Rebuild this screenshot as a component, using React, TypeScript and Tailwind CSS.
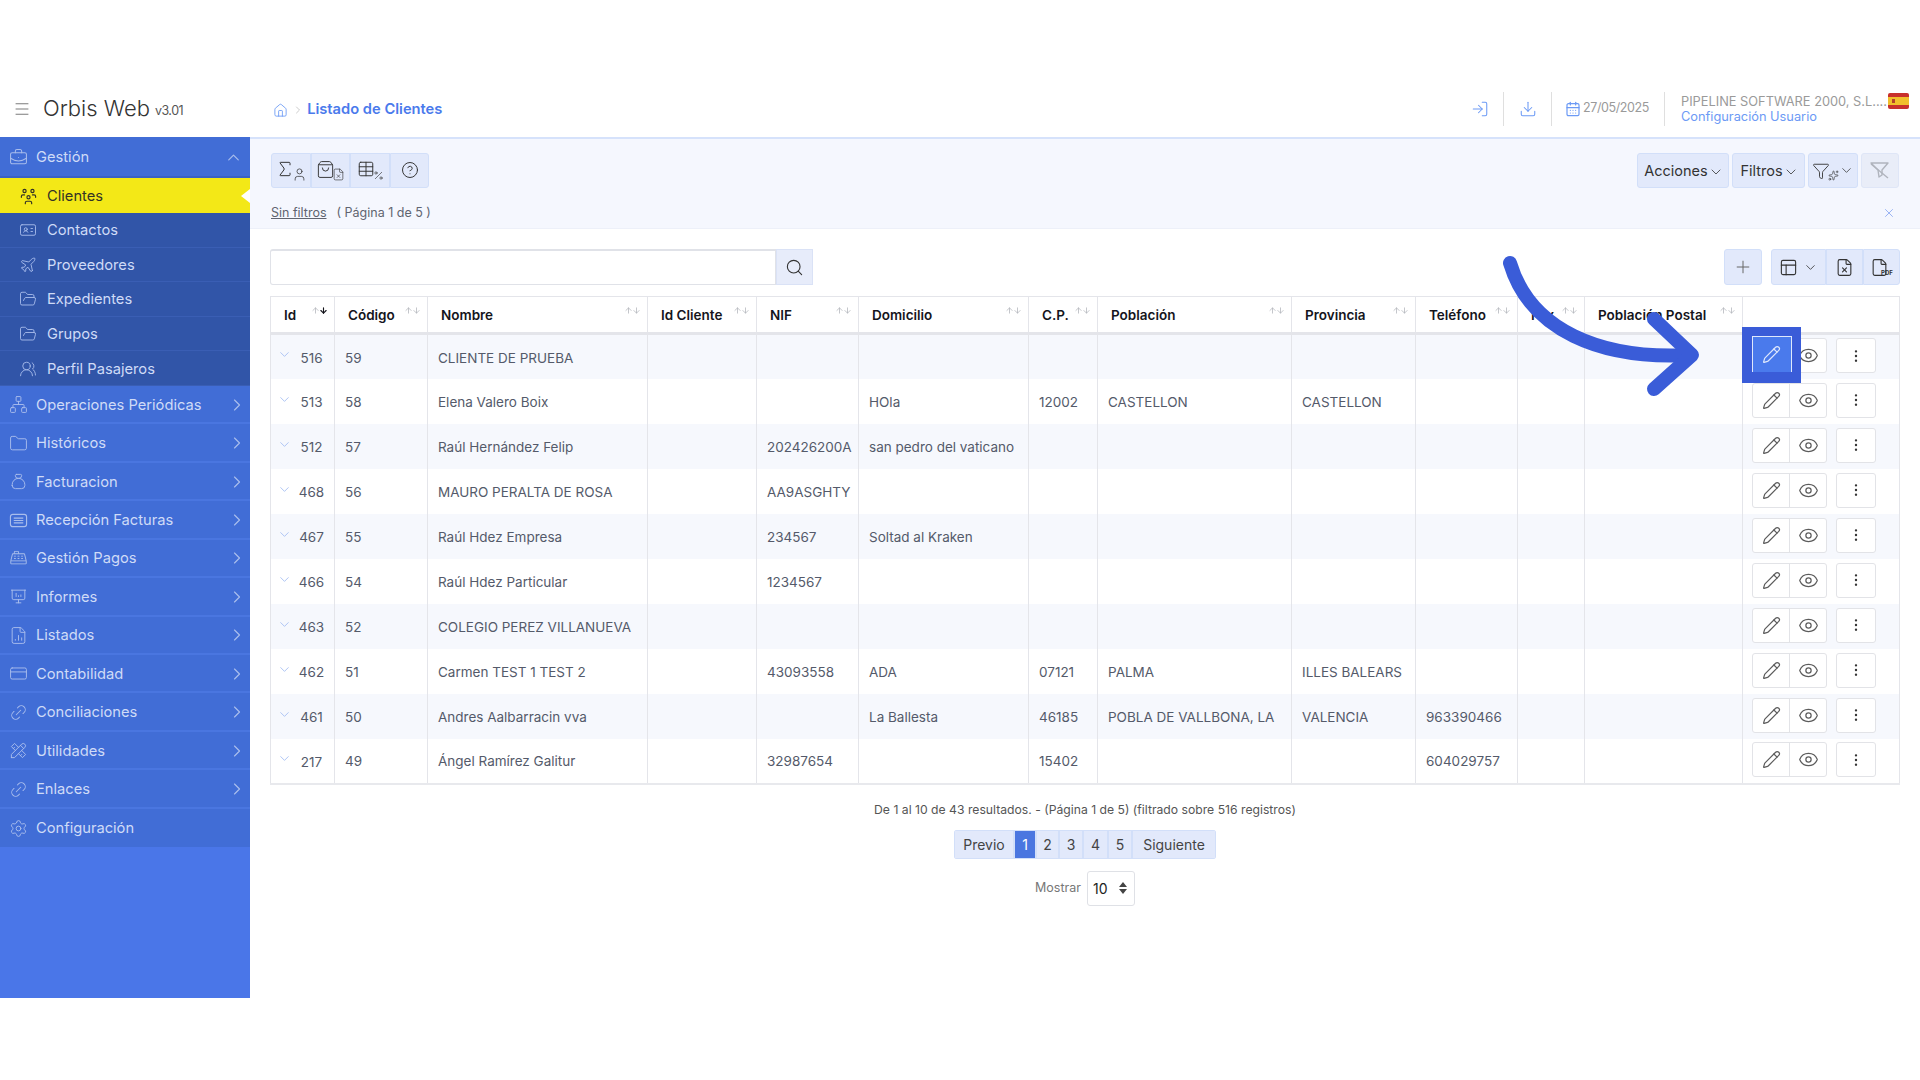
import React from 'react';
import {
  ArrowUp, ArrowDown, BriefcaseBusiness, ChevronDown, ChevronRight, ChevronUp, CircleHelp, CreditCard, EllipsisVertical, Eye, File, FileChartColumn, FileX, Filter, Folder, FolderOpen, Home, IdCard, Link2, LogIn, Menu, Network, PanelsTopLeft, Pencil, Percent, Plane, Plus, Search, Settings, ShoppingBag, Sigma, Sparkles, Table, User, UsersRound, X, Download, CalendarDays,
} from 'lucide-react';
import { TbMoneybag, TbTools, TbPresentationAnalytics, TbUsersGroup } from 'react-icons/tb';
import { PiCashRegisterLight } from 'react-icons/pi';

const font = { fontFamily: 'Inter, "Noto Sans", sans-serif' };

const LinkIcon = ({ size, className, strokeWidth }: any) => <Link2 size={size} strokeWidth={strokeWidth} className={`${className} -rotate-45`} />;
const TbI = (I: any) => ({ size, className }: any) => <I size={size} className={className} style={{ strokeWidth: 1.2 }} />;
const ListCard = ({ size, className }: any) => (
  <svg width={size} height={size} viewBox="0 0 20 20" fill="none" stroke="currentColor" strokeWidth="1.2" className={className}>
    <rect x="1.5" y="3.5" width="17" height="13" rx="2.5" />
    <path d="M5 7.5H15M5 10H15M5 12.5H15" />
  </svg>
);

const subItems = [
  { label: 'Contactos', Icon: IdCard },
  { label: 'Proveedores', Icon: Plane },
  { label: 'Expedientes', Icon: FolderOpen },
  { label: 'Grupos', Icon: FolderOpen },
  { label: 'Perfil Pasajeros', Icon: UsersRound },
];

const mainItems = [
  { label: 'Operaciones Periódicas', Icon: Network },
  { label: 'Históricos', Icon: Folder },
  { label: 'Facturacion', Icon: TbI(TbMoneybag) },
  { label: 'Recepción Facturas', Icon: ListCard },
  { label: 'Gestión Pagos', Icon: PiCashRegisterLight },
  { label: 'Informes', Icon: TbI(TbPresentationAnalytics) },
  { label: 'Listados', Icon: FileChartColumn },
  { label: 'Contabilidad', Icon: CreditCard },
  { label: 'Conciliaciones', Icon: LinkIcon },
  { label: 'Utilidades', Icon: TbI(TbTools) },
  { label: 'Enlaces', Icon: LinkIcon },
];

const headers = ['Id', 'Código', 'Nombre', 'Id Cliente', 'NIF', 'Domicilio', 'C.P.', 'Población', 'Provincia', 'Teléfono', 'Fax', 'Población Postal', ''];

const rows = [
  ['516', '59', 'CLIENTE DE PRUEBA', '', '', '', '', '', '', '', '', ''],
  ['513', '58', 'Elena Valero Boix', '', '', 'HOla', '12002', 'CASTELLON', 'CASTELLON', '', '', ''],
  ['512', '57', 'Raúl Hernández Felip', '', '202426200A', 'san pedro del vaticano', '', '', '', '', '', ''],
  ['468', '56', 'MAURO PERALTA DE ROSA', '', 'AA9ASGHTY', '', '', '', '', '', '', ''],
  ['467', '55', 'Raúl Hdez Empresa', '', '234567', 'Soltad al Kraken', '', '', '', '', '', ''],
  ['466', '54', 'Raúl Hdez Particular', '', '1234567', '', '', '', '', '', '', ''],
  ['463', '52', 'COLEGIO PEREZ VILLANUEVA', '', '', '', '', '', '', '', '', ''],
  ['462', '51', 'Carmen TEST 1 TEST 2', '', '43093558', 'ADA', '07121', 'PALMA', 'ILLES BALEARS', '', '', ''],
  ['461', '50', 'Andres Aalbarracin vva', '', '', 'La Ballesta', '46185', 'POBLA DE VALLBONA, LA', 'VALENCIA', '963390466', '', ''],
  ['217', '49', 'Ángel Ramírez Galitur', '', '32987654', '', '15402', '', '', '604029757', '', ''],
];

function Sidebar() {
  return (
    <aside className="w-[250px] h-[861px] shrink-0 bg-[#4a76e8] text-[14.7px] text-[#cfdbf7]">
      <div className="h-[41px] bg-[#416dd6] border-b-2 border-[#3a62c4] flex items-center pl-[9px] pr-[7px] pt-[1px]">
        <BriefcaseBusiness size={19} strokeWidth={1.3} className="text-[#a9bdec] mr-[8px]" />
        <span className="flex-1">Gestión</span>
        <ChevronUp size={19} strokeWidth={1.5} className="text-[#a9bdec]" />
      </div>
      <div className="relative h-[35px] bg-[#f3e817] text-[#333326] flex items-center pl-[19px] pt-[1px]">
        <TbUsersGroup size={19} className="mr-[9px]" style={{ strokeWidth: 1.5 }} />
        <span>Clientes</span>
        <span className="absolute right-0 top-[11px] w-0 h-0 border-y-[7px] border-y-transparent border-r-[9px] border-r-white" />
      </div>
      {subItems.map(({ label, Icon }) => (
        <div key={label} className="h-[34.6px] bg-[#3155a8] border-b border-[#3a5eb4] flex items-center pl-[19px] pt-[1px]">
          <Icon size={18} strokeWidth={1.2} className="text-[#a9bdec] mr-[10px]" />
          <span>{label}</span>
        </div>
      ))}
      {mainItems.map(({ label, Icon }) => (
        <div key={label} className="h-[38.45px] bg-[#416dd6] border-b-2 border-[#4a76e0] flex items-center pl-[9px] pr-[3px] pt-[1px]">
          <Icon size={19} strokeWidth={1.2} className="text-[#a9bdec] mr-[8px]" />
          <span className="flex-1">{label}</span>
          <ChevronRight size={20} strokeWidth={1.4} className="text-[#a9bdec]" />
        </div>
      ))}
      <div className="h-[38px] bg-[#416dd6] flex items-center pl-[9px] pt-[1px]">
        <Settings size={19} strokeWidth={1.2} className="text-[#a9bdec] mr-[8px]" />
        <span>Configuración</span>
      </div>
    </aside>
  );
}

function Flag() {
  return (
    <svg width="21" height="16" viewBox="0 0 21 16" className="absolute right-[11px] top-[-1px]">
      <rect width="21" height="16" rx="2" fill="#c8302c" />
      <rect y="4" width="21" height="8" fill="#f1bf2c" />
      <rect x="4" y="6" width="3" height="4" fill="#b5422a" />
    </svg>
  );
}

function Header() {
  return (
    <div className="pt-[80px]">
      <header className="relative h-[57px] flex items-center">
        <Menu size={18} strokeWidth={1.3} className="ml-[13px] text-[#777]" />
        <span className="ml-[12px] text-[22px] font-light text-[#333]">Orbis Web</span>
        <span className="ml-[5px] mt-[5px] text-[12.5px] tracking-[-0.5px] text-[#555]">v3.01</span>
        <Home size={15} strokeWidth={1.4} className="ml-[90px] mt-[3px] text-[#6c9af5]" />
        <ChevronRight size={12} strokeWidth={1.2} className="ml-[4px] mt-[2px] text-[#aaa]" />
        <span className="ml-[3px] mt-[2px] text-[14.7px] font-semibold text-[#4a7aec]">Listado de Clientes</span>
        <div className="ml-auto flex items-center h-full text-[#6c9af5]">
          <LogIn size={18} strokeWidth={1.4} />
          <span className="ml-[14px] h-[34px] w-px bg-[#dfdfdf]" />
          <Download size={18} strokeWidth={1.4} className="ml-[15px]" />
          <span className="ml-[14px] h-[34px] w-px bg-[#dfdfdf]" />
          <CalendarDays size={16} strokeWidth={1.8} className="ml-[13px]" />
          <span className="ml-[2px] text-[12.5px] tracking-[-0.4px] text-[#9a9a9a]">27/05/2025</span>
          <span className="ml-[15px] h-[34px] w-px bg-[#dfdfdf]" />
          <div className="relative ml-[16px] w-[239px] text-[12.8px] leading-[15px]">
            <div className="text-[#9a9a9a]">PIPELINE SOFTWARE 2000, S.L....</div>
            <div className="text-[#6c9af5]">Configuración Usuario</div>
            <Flag />
          </div>
        </div>
      </header>
    </div>
  );
}

const tb = 'h-[35px] flex items-center justify-center bg-[#e2e9fb] border border-[#d2dff9] text-[#333]';

function TopBar() {
  return (
    <section className="h-[92px] bg-[#f5f7fe] border-t-2 border-[#d6e2fb] border-b border-b-[#edf0f9] pl-[21px] pr-[21px] pt-[14px]">
      <div className="flex justify-between">
        <div className="flex">
          <div className={`${tb} w-[40px] rounded-l-[3px]`}>
            <Sigma size={20} strokeWidth={1.2} className="-mr-[3px] -mt-[3px]" /><User size={15} strokeWidth={1.2} className="mt-[8px]" />
          </div>
          <div className={`${tb} w-[39px]`}>
            <ShoppingBag size={19} strokeWidth={1.2} className="-mr-[3px] -mt-[3px]" /><FileX size={13} strokeWidth={1.2} className="mt-[8px]" />
          </div>
          <div className={`${tb} w-[40px]`}>
            <Table size={18} strokeWidth={1.3} className="-mr-[2px] -mt-[3px]" /><Percent size={11} strokeWidth={1.4} className="mt-[10px]" />
          </div>
          <div className={`${tb} w-[39px] rounded-r-[3px]`}>
            <CircleHelp size={18} strokeWidth={1.3} className="-mt-[1px]" />
          </div>
        </div>
        <div className="flex gap-[3px] text-[14.5px] text-[#444]">
          <div className={`${tb} w-[92px] rounded-[3px] pl-[2px]`}>Acciones<ChevronDown size={16} strokeWidth={1.2} className="mt-[2px]" /></div>
          <div className={`${tb} w-[73px] rounded-[3px] pl-[2px]`}>Filtros<ChevronDown size={16} strokeWidth={1.2} className="mt-[2px]" /></div>
          <div className={`${tb} w-[50px] rounded-[3px]`}>
            <Filter size={18} strokeWidth={1.2} className="-mr-[2px]" /><Sparkles size={11} strokeWidth={1.4} className="mt-[9px]" /><ChevronDown size={15} strokeWidth={1.2} />
          </div>
          <div className="h-[35px] w-[38px] rounded-[3px] flex items-center justify-center bg-[#e9edf8] border border-[#dfe6f7] text-[#b0b4bd]">
            <svg width="22" height="20" viewBox="0 0 22 20" fill="none" stroke="currentColor" strokeWidth="1.4" strokeLinejoin="round">
              <path d="M2 2H19L13 9V14L10 16 9 9Z" /><path d="M2 3 19 17" />
            </svg>
          </div>
        </div>
      </div>
      <div className="mt-[16px] flex items-center text-[12.5px] text-[#606470]">
        <span className="underline">Sin filtros</span>
        <span className="ml-[10px]">( Página 1 de 5 )</span>
        <X size={14} strokeWidth={1.3} className="ml-auto mr-[3px] text-[#7d9ff0]" />
      </div>
    </section>
  );
}

function SearchRow() {
  return (
    <div className="mt-[20px] flex items-start">
      <div className="w-[506px] h-[36px] border border-[#e0e2e8] border-t-2 rounded-l-[3px] bg-white" />
      <div className="w-[37px] h-[36px] bg-[#e7ecfa] border border-[#dae2f6] flex items-center justify-center text-[#333]">
        <Search size={19} strokeWidth={1.4} />
      </div>
      <div className="ml-auto flex">
        <div className="h-[36px] w-[38px] rounded-[3px] flex items-center justify-center bg-[#e2e9fb] border border-[#d2dff9] text-[#666]">
          <Plus size={20} strokeWidth={1.2} />
        </div>
        <div className="ml-[9px] flex">
          <div className="h-[36px] w-[55px] rounded-l-[3px] flex items-center justify-center bg-[#e2e9fb] border border-[#d2dff9] text-[#333]">
            <PanelsTopLeft size={19} strokeWidth={1.4} /><ChevronDown size={15} strokeWidth={1.3} className="ml-[5px]" />
          </div>
          <div className="h-[36px] w-[37px] flex items-center justify-center bg-[#e2e9fb] border border-[#d2dff9] text-[#333]">
            <FileX size={19} strokeWidth={1.4} />
          </div>
          <div className="relative h-[36px] w-[37px] rounded-r-[3px] flex items-center justify-center bg-[#e2e9fb] border border-[#d2dff9] text-[#333]">
            <File size={19} strokeWidth={1.4} className="-ml-[4px]" />
            <span className="absolute left-[17px] top-[19px] text-[6px] leading-[7px] font-bold">PDF</span>
          </div>
        </div>
      </div>
    </div>
  );
}

function DataTable() {
  return (
    <table className="mt-[11px] w-[1629px] table-fixed border-collapse text-[13.5px] text-[#545a6a] border-b-2 border-[#e8e9ed]">
      <colgroup>
        <col className="w-[64px]" /><col className="w-[93px]" /><col className="w-[220px]" /><col className="w-[109px]" />
        <col className="w-[102px]" /><col className="w-[170px]" /><col className="w-[69px]" /><col className="w-[194px]" />
        <col className="w-[124px]" /><col className="w-[102px]" /><col className="w-[67px]" /><col className="w-[158px]" /><col className="w-[157px]" />
      </colgroup>
      <thead>
        <tr className="h-[37px]">
          {headers.map((h, i) => (
            <th key={i} className="relative border border-[#e4e5ea] border-b-[3px] pl-[13px] pt-[2px] text-left text-[13.5px] font-semibold text-[#15151c] align-middle">
              {h}
              {h && (
                <span className="absolute right-[6px] top-[9px] flex text-[#b0b3ba]">
                  <ArrowUp size={9} strokeWidth={2} className="-mr-[1px]" />
                  <ArrowDown size={9} strokeWidth={i === 0 ? 3 : 2} className={i === 0 ? 'text-[#15151c]' : ''} />
                </span>
              )}
            </th>
          ))}
        </tr>
      </thead>
      <tbody>
        {rows.map((r, ri) => (
          <tr key={r[0]} className={`h-[45px] ${ri % 2 === 0 ? 'bg-[#f6f8fd]' : 'bg-white'}`}>
            <td className="border-x border-[#e4e5ea]">
              <div className="flex items-center pl-[6px]">
                <ChevronDown size={15} strokeWidth={1.3} className="text-[#9db7f2] mb-[4px]" />
                <span className="flex-1 text-center pr-[3px] pt-[3px]">{r[0]}</span>
              </div>
            </td>
            {r.slice(1).map((c, ci) => (
              <td key={ci} className="border-x border-[#e4e5ea] pl-[10px] pt-[2px] whitespace-nowrap overflow-hidden">{c}</td>
            ))}
            <td className="border-x border-[#e4e5ea] pl-[9px]">
              <div className="flex items-center mb-[2px]">
                <div className="flex h-[35px] w-[75px] rounded-[3px] border border-[#e2e3e7] bg-white text-[#5c5c5c]">
                  <span className="flex-1 flex items-center justify-center border-r border-[#e2e3e7]"><Pencil size={19} strokeWidth={1.5} /></span>
                  <span className="flex-1 flex items-center justify-center"><Eye size={21} strokeWidth={1.4} /></span>
                </div>
                <div className="ml-[9px] h-[35px] w-[40px] rounded-[3px] border border-[#e2e3e7] bg-white flex items-center justify-center text-[#333]">
                  <EllipsisVertical size={16} strokeWidth={1.6} />
                </div>
              </div>
            </td>
          </tr>
        ))}
      </tbody>
    </table>
  );
}

function Pagination() {
  const pages = [
    { t: 'Previo', w: 'w-[60px]' },
    { t: '1', w: 'w-[22px]', active: true },
    { t: '2', w: 'w-[23px]' },
    { t: '3', w: 'w-[24px]' },
    { t: '4', w: 'w-[25px]' },
    { t: '5', w: 'w-[24px]' },
    { t: 'Siguiente', w: 'w-[84px]' },
  ];
  return (
    <div className="flex flex-col items-center">
      <div className="mt-[17px] text-[12.2px] leading-[16px] text-[#555]">De 1 al 10 de 43 resultados. - (Página 1 de 5) (filtrado sobre 516 registros)</div>
      <div className="mt-[12px] flex h-[29px] text-[14px] text-[#444] rounded-[3px] overflow-hidden">
        {pages.map((p) => (
          <span key={p.t} className={`${p.w} flex items-center justify-center border border-[#d2dff9] ${p.active ? 'bg-[#4a76e0] text-white' : 'bg-[#e2e9fb]'}`}>{p.t}</span>
        ))}
      </div>
      <div className="mt-[12px] flex items-center">
        <span className="text-[12.5px] text-[#777]">Mostrar</span>
        <div className="ml-[6px] h-[35px] w-[48px] rounded-[3px] border border-[#dfe1e6] flex items-center pl-[5px] text-[14px] text-[#222]">
          <span className="flex-1">10</span>
          <svg width="8" height="12" viewBox="0 0 8 12" className="mr-[7px] text-[#444]"><path d="M4 0 8 5H0ZM4 12 0 7H8Z" fill="currentColor" /></svg>
        </div>
      </div>
    </div>
  );
}

function Overlay() {
  return (
    <>
      <svg width="1920" height="1080" viewBox="0 0 1920 1080" className="absolute left-0 top-0 pointer-events-none" fill="none">
        <path d="M1510 263C1530 330 1600 360 1690 355" stroke="#3a5cd8" strokeWidth="14" strokeLinecap="round" />
        <path d="M1654 319 1692 355 1654 389" stroke="#3a5cd8" strokeWidth="14" strokeLinecap="round" strokeLinejoin="round" />
      </svg>
      <div className="absolute left-[1742px] top-[327px] w-[59px] h-[56px] bg-[#3a5cd8] flex items-center justify-center">
        <div className="w-[40px] h-[36px] mb-[2px] bg-[#4a7aec] border-t border-x border-[#dfe8fc] flex items-center justify-center text-[#dfe8fc]">
          <Pencil size={19} strokeWidth={1.5} />
        </div>
      </div>
    </>
  );
}

export default function App() {
  return (
    <div className="relative w-[1920px] h-[1080px] bg-white overflow-hidden" style={font}>
      <Header />
      <div className="flex">
        <Sidebar />
        <main className="flex-1">
          <TopBar />
          <div className="px-[20px]">
            <SearchRow />
            <DataTable />
            <Pagination />
          </div>
        </main>
      </div>
      <Overlay />
    </div>
  );
}
